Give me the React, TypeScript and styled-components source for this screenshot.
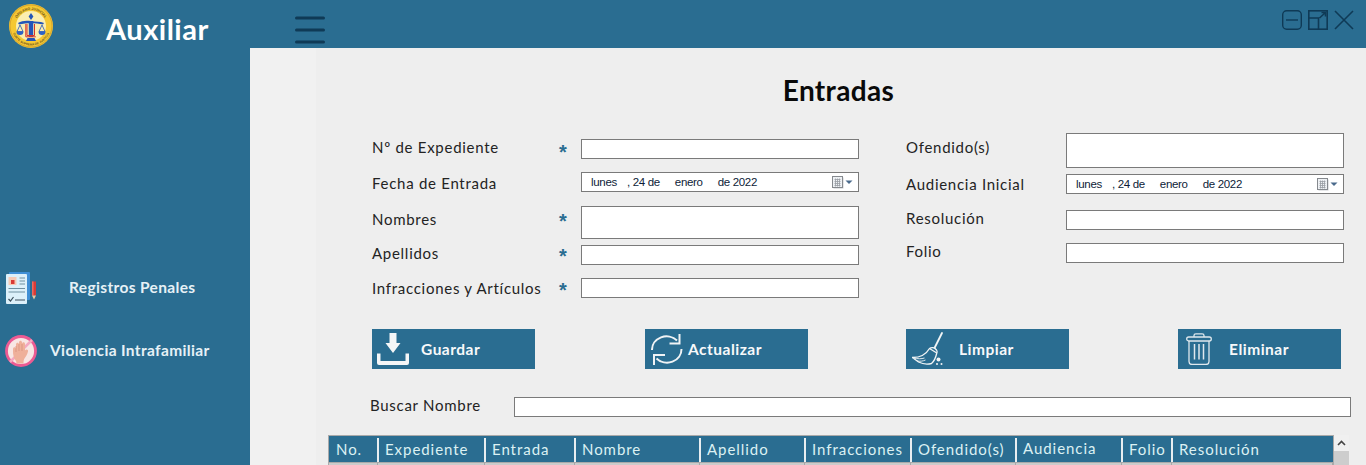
import React from 'react';
import styled, { createGlobalStyle } from 'styled-components';

const BLUE = '#2a6d91';
const DARK = '#0f3a56';
const FONT = `Lato, "Open Sans", "Liberation Sans", sans-serif`;

const columns = [
  { name: 'No.', width: 49 },
  { name: 'Expediente', width: 107 },
  { name: 'Entrada', width: 90 },
  { name: 'Nombre', width: 125 },
  { name: 'Apellido', width: 105 },
  { name: 'Infracciones', width: 106 },
  { name: 'Ofendido(s)', width: 105 },
  { name: 'Audiencia', width: 106, lifted: true },
  { name: 'Folio', width: 50 },
  { name: 'Resolución', width: 161 },
];
const gridColumns = columns.map((c) => `${c.width}px`).join(' ');

const Logo = () => (
  <svg width="44" height="44" viewBox="0 0 44 44">
    <defs>
      <path id="logoTop" d="M6 22a16 16 0 0 1 32 0" />
      <path id="logoBottom" d="M2.500 22a19.500 19.500 0 0 0 39 0" />
    </defs>
    <circle cx="22" cy="22" r="22" fill="#f5c832" />
    <circle cx="22" cy="22" r="21" fill="none" stroke="#d9a52e" strokeWidth="1" />
    <circle cx="22" cy="22" r="15" fill="#fbeeb0" />
    <text fontSize="3.600" fontWeight="700" fill="#6b5320" fontFamily="Liberation Sans, sans-serif" textAnchor="middle">
      <textPath href="#logoTop" startOffset="50%">ÓRGANO JUDICIAL</textPath>
    </text>
    <text fontSize="3" fontWeight="700" fill="#6b5320" fontFamily="Liberation Sans, sans-serif" textAnchor="middle">
      <textPath href="#logoBottom" startOffset="50%">CORTE SUPREMA DE JUSTICIA</textPath>
    </text>
    <path d="M22 9l2.400 3.400L22 16l-2.400-3.600z" fill="#2456b8" />
    <path d="M9 19c4-2.400 8-2.800 13-2s9 .4 13 2l-1 1.600c-4-1-8-1.400-12-1.400s-8 .4-12 1.400z" fill="#2456b8" />
    <path d="M11 21l-3 6.500h6z M33 21l-3 6.500h6z" fill="none" stroke="#2456b8" strokeWidth=".8" />
    <path d="M7.500 27.500a3.500 3.500 0 0 0 7 0z M29.500 27.500a3.500 3.500 0 0 0 7 0z" fill="#2f62c4" />
    <rect x="19.800" y="17" width="4.400" height="16" fill="#2456b8" />
    <path d="M18 20v11.500h7.500V20M16.800 20v12.800h10" fill="none" stroke="#d8352a" strokeWidth="1" />
    <path d="M17 37l1.500-3h7l1.500 3z" fill="#2456b8" />
  </svg>
);

const Hamburger = () => (
  <svg width="30" height="28" viewBox="0 0 30 28">
    <path d="M1.500 2h27M1.500 14h27M1.500 26h27" stroke={DARK} strokeWidth="3" strokeLinecap="round" />
  </svg>
);

const WindowIcons = () => (
  <>
    <svg width="20" height="20" viewBox="0 0 20 20" fill="none" stroke={DARK} strokeWidth="1.400">
      <rect x=".7" y=".7" width="18.600" height="18.600" rx="4" />
      <path d="M4 10h12" />
    </svg>
    <svg width="20" height="20" viewBox="0 0 20 20" fill="none" stroke={DARK} strokeWidth="1.600">
      <rect x=".8" y=".8" width="18.400" height="18.400" />
      <path d="M.8 8h9.700v11.200M11.500 8l6-5.500M13.500 2.500h4v4" />
    </svg>
    <svg width="20" height="20" viewBox="0 0 20 20" fill="none" stroke={DARK} strokeWidth="1.600">
      <path d="M1 1l18 18M19 1L1 19" />
    </svg>
  </>
);

const RegistrosIcon = () => (
  <svg width="32" height="32" viewBox="0 0 32 32">
    <rect x="4" y="0" width="21" height="28" rx="1" fill="#3f8fd6" />
    <rect x="1" y="2" width="21" height="30" rx="1" fill="#dcf0fa" />
    <rect x="3.500" y="5" width="8" height="8" fill="#f7c9b4" />
    <rect x="6" y="8" width="3.500" height="4" fill="#d93a36" />
    <path d="M14.500 6h5.500M14.500 9h5.500M14.500 12h5.500M3.500 16.500h16.500M3.500 20h16.500" stroke="#6f8fa0" strokeWidth="1.200" />
    <path d="M3.500 27l2 2 3-4M10 28h10" stroke="#3c4f5c" strokeWidth="1.200" fill="none" />
    <rect x="27" y="9.500" width="4" height="14" fill="#d93a36" />
    <rect x="27" y="9.500" width="1.500" height="14" fill="#ee6a5e" />
    <path d="M27 23.500h4l-2 4z" fill="#eac9a4" />
  </svg>
);

const ManoIcon = () => (
  <svg width="32" height="32" viewBox="0 0 32 32">
    <circle cx="16" cy="16" r="14.500" fill="#f8e6e4" stroke="#ec5b93" strokeWidth="2.800" />
    <path d="M27 5L5 27" stroke="#f4a9c0" strokeWidth="2.500" />
    <path
      d="M8 14c0-2.200 3-2.200 3 0V9.500c0-2.200 3-2.200 3 0V7.500c0-2.200 3-2.200 3 0V9c0-2.200 3-2.200 3 0v6.500c.8-1.800 3.600-1.200 3 1-.7 3-2 5-3.200 6.500-1 1.300-1.300 3-1.300 5.500h-7c0-2.500-1.400-4-2.400-5.500C8.700 21 8 19.500 8 17z"
      fill="#efb09a"
    />
    <path d="M11 11v6M14 9v7M17 9v7" stroke="#d68d78" strokeWidth=".7" />
  </svg>
);

const GuardarIcon = () => (
  <svg width="32" height="32" viewBox="0 0 32 32" fill="#f4f6f7">
    <path d="M12.500 0h7v10h4L16 20 8.500 10h4z" />
    <path d="M0 20.500h3.500V28h25v-7.500H32V30a2 2 0 0 1-2 2H2a2 2 0 0 1-2-2z" />
  </svg>
);

const ActualizarIcon = () => (
  <svg width="32" height="33" viewBox="0 0 32 33" fill="none" stroke="#f0f3f5" strokeWidth="2">
    <path d="M1 17A14.500 13.500 0 0 1 26 7.500" />
    <path d="M28.500 1v9.500h-10" />
    <path d="M30.500 16a14.500 13.500 0 0 1-25 9.500" />
    <path d="M3 32V22h11" />
  </svg>
);

const LimpiarIcon = () => (
  <svg width="32" height="34" viewBox="0 0 32 34" fill="none" stroke="#f2f5f6" strokeWidth="1.300">
    <path d="M30 1L22 17" strokeWidth="1.800" strokeLinecap="round" />
    <path d="M17.500 16.500c2-1.500 5-1.200 7 1.500.6.900.7 2 .3 3-.8 3.500-1.800 7.500-5.300 10.500-4 1-9 .5-13-1.500L.5 25.500c7 0 13.500-3 17-9z" fill={BLUE} />
    <path d="M17.500 16.500l7.300 4.500" />
    <path d="M1.500 26c4 1 8 1 11 0M5 29c3 .5 6 .2 8.500-1" strokeWidth=".9" />
    <circle cx="26.500" cy="27.500" r="2" fill="#f2f5f6" stroke="none" />
    <circle cx="25" cy="32" r="1" fill="#f2f5f6" stroke="none" />
    <circle cx="29.500" cy="32" r="1" fill="#f2f5f6" stroke="none" />
  </svg>
);

const EliminarIcon = () => (
  <svg width="26" height="32" viewBox="0 0 26 32" fill="none" stroke="#dfe8ed" strokeWidth="1.300">
    <path d="M8 4V2.500C8 1.500 8.800 .8 9.800 .8h6.400c1 0 1.800.7 1.800 1.700V4" />
    <rect x=".7" y="4" width="24.600" height="4" rx="2" />
    <path d="M3 8v20.500a3 3 0 0 0 3 3h14a3 3 0 0 0 3-3V8" />
    <path d="M8.500 11v15.500M13 11v15.500M17.500 11v15.500" strokeWidth="1.500" />
  </svg>
);

const CalendarGlyph = () => (
  <svg width="21" height="13" viewBox="0 0 21 13">
    <rect x="1.500" y="1.500" width="10" height="11" fill="#c9ccd0" />
    <rect x=".5" y=".5" width="10" height="11" fill="#eef1f4" stroke="#85898e" />
    <path d="M2.500 3.500h6M2.500 5.500h6M2.500 7.500h6M2.500 9.500h6M3.500 2.500v8M5.500 2.500v8M7.500 2.500v8" stroke="#989da3" strokeWidth=".8" />
    <path d="M13.500 4.500h7l-3.500 3.500z" fill="#4a6a8c" />
  </svg>
);

const DateValue = () => (
  <DateInput>
    <DatePart $left={0}>lunes</DatePart>
    <DatePart $left={10}>, 24 de</DatePart>
    <DatePart $left={15}>enero</DatePart>
    <DatePart $left={15}>de 2022</DatePart>
    <CalendarSlot>
      <CalendarGlyph />
    </CalendarSlot>
  </DateInput>
);

const App: React.FC = () => (
  <Page>
    <GlobalStyle />
    <TopBar>
      <Brand>
        <Logo />
        <BrandName>Auxiliar</BrandName>
      </Brand>
      <MenuButton>
        <Hamburger />
      </MenuButton>
      <WindowControls>
        <WindowIcons />
      </WindowControls>
    </TopBar>
    <Body>
      <Sidebar>
        <NavItem $textLeft={32}>
          <RegistrosIcon />
          <NavLabel>Registros Penales</NavLabel>
        </NavItem>
        <NavItem $textLeft={13}>
          <ManoIcon />
          <NavLabel>Violencia Intrafamiliar</NavLabel>
        </NavItem>
      </Sidebar>
      <Gutter />
      <Panel>
        <Title>Entradas</Title>
        <FormGrid>
          <FormColumn $top={6}>
            <Field $labelWidth={187}>
              <FieldLabel $shift={-2}>Nº de Expediente</FieldLabel>
              <Star>*</Star>
              <TextBox $height={20} />
            </Field>
            <Field $labelWidth={209} $gap={13}>
              <FieldLabel $shift={1}>Fecha de Entrada</FieldLabel>
              <DateValue />
            </Field>
            <Field $labelWidth={187} $gap={14}>
              <FieldLabel $shift={-4}>Nombres</FieldLabel>
              <Star $shift={-5}>*</Star>
              <TextBox $height={33} />
            </Field>
            <Field $labelWidth={187} $gap={6}>
              <FieldLabel $shift={-2}>Apellidos</FieldLabel>
              <Star $shift={-2}>*</Star>
              <TextBox $height={20} />
            </Field>
            <Field $labelWidth={187} $gap={13}>
              <FieldLabel>Infracciones y Artículos</FieldLabel>
              <Star $shift={-1}>*</Star>
              <TextBox $height={20} />
            </Field>
          </FormColumn>
          <FormColumn>
            <Field $labelWidth={160}>
              <FieldLabel $shift={-4}>Ofendido(s)</FieldLabel>
              <TextBox $height={35} />
            </Field>
            <Field $labelWidth={160} $gap={6}>
              <FieldLabel>Audiencia Inicial</FieldLabel>
              <DateValue />
            </Field>
            <Field $labelWidth={160} $gap={16}>
              <FieldLabel $shift={-2}>Resolución</FieldLabel>
              <TextBox $height={20} />
            </Field>
            <Field $labelWidth={160} $gap={13}>
              <FieldLabel $shift={-2}>Folio</FieldLabel>
              <TextBox $height={20} />
            </Field>
          </FormColumn>
        </FormGrid>
        <ActionGrid>
          <ActionPair $gap={110}>
            <ActionButton $iconLeft={5} $textLeft={44}>
              <IconSlot><GuardarIcon /></IconSlot>
              <span>Guardar</span>
            </ActionButton>
            <ActionButton $iconLeft={6} $textLeft={37}>
              <IconSlot><ActualizarIcon /></IconSlot>
              <span>Actualizar</span>
            </ActionButton>
          </ActionPair>
          <ActionPair $gap={109}>
            <ActionButton $iconLeft={6} $textLeft={47}>
              <IconSlot><LimpiarIcon /></IconSlot>
              <span>Limpiar</span>
            </ActionButton>
            <ActionButton $iconLeft={8} $textLeft={49}>
              <IconSlot $width={26}><EliminarIcon /></IconSlot>
              <span>Eliminar</span>
            </ActionButton>
          </ActionPair>
        </ActionGrid>
        <SearchRow>
          <SearchLabel>Buscar Nombre</SearchLabel>
          <TextBox $height={20} />
        </SearchRow>
        <TableArea>
          <TableFrame>
            <HeaderRow>
              {columns.map((c) => (
                <HeaderCell key={c.name} $lifted={c.lifted}>
                  {c.name}
                </HeaderCell>
              ))}
            </HeaderRow>
            <DataRow>
              {columns.map((c) => (
                <DataCell key={c.name} />
              ))}
            </DataRow>
          </TableFrame>
          <ScrollTrack>
            <ScrollArrow>
              <svg width="9" height="6" viewBox="0 0 9 6">
                <path d="M1 5l3.500-3.500L8 5" fill="none" stroke="#444" strokeWidth="1.600" />
              </svg>
            </ScrollArrow>
            <ScrollThumb />
          </ScrollTrack>
        </TableArea>
      </Panel>
    </Body>
  </Page>
);

export default App;

const GlobalStyle = createGlobalStyle`
  html, body {
    margin: 0;
    padding: 0;
    overflow: hidden;
  }
  * {
    box-sizing: border-box;
  }
`;

const Page = styled.div`
  height: 100vh;
  overflow: hidden;
  display: flex;
  flex-direction: column;
  background: ${BLUE};
  font-family: ${FONT};
`;

const TopBar = styled.header`
  height: 48px;
  flex-shrink: 0;
  display: flex;
  align-items: flex-start;
  padding-left: 9px;
  background: ${BLUE};
`;

const Brand = styled.div`
  width: 286px;
  height: 48px;
  padding-top: 4px;
  display: flex;
  align-items: flex-start;
  gap: 53px;
`;

const BrandName = styled.div`
  color: #fff;
  font-size: 29px;
  line-height: 34px;
  font-weight: 700;
  letter-spacing: 0.5px;
  margin-top: 8px;
`;

const MenuButton = styled.div`
  margin-top: 16px;
  display: flex;
`;

const WindowControls = styled.div`
  margin-left: auto;
  margin-right: 12px;
  margin-top: 10px;
  display: flex;
  gap: 6px;
`;

const Body = styled.div`
  flex: 1;
  min-height: 0;
  display: flex;
`;

const Sidebar = styled.nav`
  width: 250px;
  flex-shrink: 0;
  padding: 224px 0 0 5px;
  display: flex;
  flex-direction: column;
  gap: 31px;
  background: ${BLUE};
`;

const NavItem = styled.div<{ $textLeft: number }>`
  display: flex;
  align-items: center;
  gap: ${(p) => p.$textLeft}px;
  height: 32px;
`;

const NavLabel = styled.span`
  color: #e6f1f6;
  font-size: 15.5px;
  font-weight: 700;
  letter-spacing: 0.35px;
  line-height: 18px;
  margin-bottom: 2px;
  white-space: nowrap;
`;

const Gutter = styled.div`
  width: 66px;
  flex-shrink: 0;
  background: #f1f1f1;
`;

const Panel = styled.main`
  flex: 1;
  min-width: 0;
  padding: 26px 0 0 12px;
  background: #eeeeee;
`;

const Title = styled.h1`
  margin: 0 0 27px 0;
  width: 1021px;
  text-align: center;
  font-size: 28px;
  line-height: 32px;
  font-weight: 700;
  color: #0a0a0a;
  letter-spacing: 0.35px;
`;

const FormGrid = styled.div`
  display: grid;
  grid-template-columns: 487px 438px;
  column-gap: 47px;
  margin-left: 44px;
`;

const FormColumn = styled.div<{ $top?: number }>`
  display: flex;
  flex-direction: column;
  padding-top: ${(p) => p.$top ?? 0}px;
`;

const Field = styled.div<{ $labelWidth: number; $gap?: number }>`
  display: grid;
  grid-template-columns: ${(p) => p.$labelWidth}px ${(p) => (p.$labelWidth === 187 ? '22px' : '')} 1fr;
  align-items: center;
  margin-top: ${(p) => p.$gap ?? 0}px;
`;

const FieldLabel = styled.label<{ $shift?: number }>`
  position: relative;
  top: ${(p) => p.$shift ?? 0}px;
  color: #232323;
  font-size: 15px;
  letter-spacing: 0.72px;
  line-height: 16px;
  white-space: nowrap;
`;

const Star = styled.span<{ $shift?: number }>`
  position: relative;
  top: ${(p) => (p.$shift ?? 0) + 3}px;
  color: ${BLUE};
  font-family: 'Liberation Sans', sans-serif;
  font-weight: 700;
  font-size: 20px;
  line-height: 16px;
  height: 16px;
`;

const TextBox = styled.div<{ $height: number }>`
  height: ${(p) => p.$height}px;
  width: 100%;
  background: #fff;
  border: 1px solid #7a7a7a;
`;

const DateInput = styled.div`
  height: 20px;
  display: flex;
  align-items: center;
  padding-left: 9px;
  background: #fff;
  border: 1px solid #7a7a7a;
  font-family: 'Liberation Sans', sans-serif;
  font-size: 11.5px;
  letter-spacing: -0.32px;
  color: #0d1c38;
`;

const DatePart = styled.span<{ $left: number }>`
  margin-left: ${(p) => p.$left}px;
  white-space: nowrap;
`;

const CalendarSlot = styled.span`
  margin-left: auto;
  margin-right: 5px;
  display: flex;
`;

const ActionGrid = styled.div`
  display: grid;
  grid-template-columns: 487px 438px;
  column-gap: 47px;
  margin: 31px 0 0 44px;
`;

const ActionPair = styled.div<{ $gap: number }>`
  display: flex;
  gap: ${(p) => p.$gap}px;
`;

const ActionButton = styled.button<{ $iconLeft: number; $textLeft: number }>`
  width: 163px;
  height: 40px;
  display: flex;
  align-items: center;
  padding: 0 0 0 ${(p) => p.$iconLeft}px;
  gap: ${(p) => p.$textLeft - 32}px;
  border: none;
  background: ${BLUE};
  color: #f7f9fa;
  font-family: ${FONT};
  font-size: 15.5px;
  font-weight: 700;
  letter-spacing: 0.5px;
`;

const IconSlot = styled.span<{ $width?: number }>`
  width: ${(p) => p.$width ?? 32}px;
  display: flex;
  flex-shrink: 0;
`;

const SearchRow = styled.div`
  display: grid;
  grid-template-columns: 144px 837px;
  align-items: center;
  margin: 28px 0 0 42px;
`;

const SearchLabel = styled.label`
  position: relative;
  top: -2px;
  color: #232323;
  font-size: 15px;
  letter-spacing: 0.72px;
  line-height: 16px;
  white-space: nowrap;
`;

const TableArea = styled.div`
  display: flex;
  margin-top: 18px;
`;

const TableFrame = styled.div`
  width: 1006px;
  border: 1px solid #a9a9a9;
  border-bottom: none;
  overflow: hidden;
`;

const HeaderRow = styled.div`
  display: grid;
  grid-template-columns: ${gridColumns};
  height: 26px;
  background: ${BLUE};
`;

const HeaderCell = styled.div<{ $lifted?: boolean }>`
  position: relative;
  padding: ${(p) => (p.$lifted ? '0 0 3px 7px' : '0 0 0 7px')};
  display: flex;
  align-items: center;
  color: #dcf1f3;
  font-size: 15px;
  letter-spacing: 0.95px;
  white-space: nowrap;

  &::after {
    content: '';
    position: absolute;
    top: 2px;
    bottom: 0;
    right: -1px;
    width: 2px;
    background: #e8eef1;
  }
  &:last-child::after {
    display: none;
  }
`;

const DataRow = styled.div`
  display: grid;
  grid-template-columns: ${gridColumns};
  height: 20px;
  background: #cbcbcb;
  border-top: 1px solid #a9a9a9;
`;

const DataCell = styled.div`
  border-right: 1px solid #a8a8a8;
`;

const ScrollTrack = styled.div`
  width: 15px;
  display: flex;
  flex-direction: column;
  background: #f0f0f0;
`;

const ScrollArrow = styled.div`
  height: 16px;
  display: flex;
  align-items: center;
  justify-content: center;
`;

const ScrollThumb = styled.div`
  height: 40px;
  background: #cdcdcd;
`;
